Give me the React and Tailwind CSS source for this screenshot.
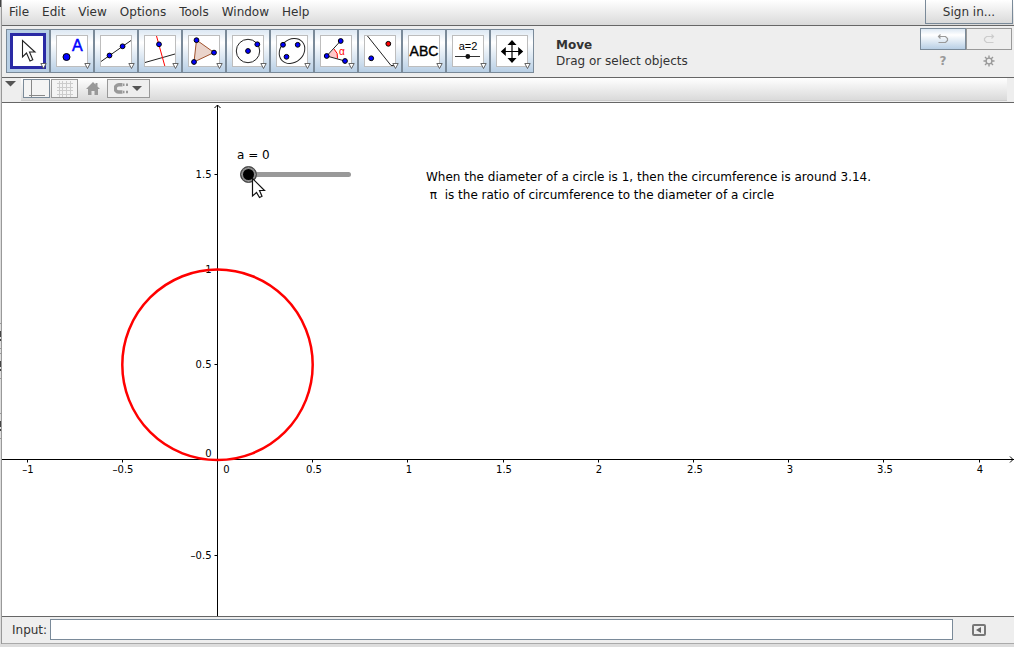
import { useState } from "react";

const UNIT = 190.4;
const ORIGIN = { x: 215.5, y: 356.5 };

const menus = ["File", "Edit", "View", "Options", "Tools", "Window", "Help"];
const xTicks = [-1, -0.5, 0.5, 1, 1.5, 2, 2.5, 3, 3.5, 4];
const yTicks = [1.5, 1, 0.5, -0.5];

function Dot({ x, y, r = 2.4, fill = "#0000ff" }) {
  return <circle cx={x} cy={y} r={r} fill={fill} stroke="#000" strokeWidth="1" />;
}

const tools = [
  {
    id: "Move",
    art: <path d="M15.5 10.5v16.5l4-4 3.5 8 2.8-1.3-3.3-7.7h5.5z" fill="#fff" stroke="#222" strokeWidth="1.1" />,
  },
  {
    id: "Point",
    art: (
      <>
        <Dot x={15.5} y={27} r={3.5} />
        <text x="21" y="21" fontSize="16" fill="#0000ff" stroke="#0000ff" strokeWidth="0.5">A</text>
      </>
    ),
  },
  {
    id: "Line",
    art: (
      <>
        <path d="M6 31.5 36 10.5" stroke="#222" />
        <Dot x={14.5} y={25.5} />
        <Dot x={27.6} y={16.3} />
      </>
    ),
  },
  {
    id: "Perpendicular Line",
    art: (
      <>
        <path d="M6 32.5 36 24" stroke="#222" />
        <path d="M17.5 6 25.8 36" stroke="#f00" />
        <Dot x={20} y={14.3} />
      </>
    ),
  },
  {
    id: "Polygon",
    art: (
      <>
        <path d="M13.5 10 31 22.5 11 32z" fill="#ead4cb" stroke="#a0522d" />
        <Dot x={13.5} y={10.2} />
        <Dot x={31} y={22.6} />
        <Dot x={11} y={32} />
      </>
    ),
  },
  {
    id: "Circle with Center through Point",
    art: (
      <>
        <circle cx="21" cy="21" r="11.7" fill="none" stroke="#222" />
        <Dot x={21} y={21} />
        <Dot x={30.3} y={14.3} />
      </>
    ),
  },
  {
    id: "Ellipse",
    art: (
      <>
        <ellipse cx="21" cy="21" rx="13.8" ry="11.4" transform="rotate(-42 21 21)" fill="none" stroke="#222" />
        <Dot x={12} y={14.8} />
        <Dot x={26.7} y={14.8} />
        <Dot x={15.5} y={26.8} />
      </>
    ),
  },
  {
    id: "Angle",
    art: (
      <>
        <path d="M11.7 26 19 19Q23.500 23 22.500 28.500z" fill="#ffc8c8" />
        <path d="M19 19Q23.500 23 22.500 28.500" fill="none" stroke="#f00" />
        <path d="M25.5 11 11.7 26 30 31" fill="none" stroke="#222" />
        <Dot x={25.7} y={11} />
        <Dot x={11.7} y={26} />
        <Dot x={30} y={31} />
        <text x="24" y="25" fontSize="10" fill="#f00">α</text>
      </>
    ),
  },
  {
    id: "Reflect about Line",
    art: (
      <>
        <path d="M8.500 6 32 35.500H36" fill="none" stroke="#222" />
        <Dot x={29.3} y={13.8} fill="#ff0000" />
        <Dot x={12.2} y={28.3} />
      </>
    ),
  },
  {
    id: "Text",
    art: (
      <text x="21" y="26" fontSize="14" textAnchor="middle" fill="#000" stroke="#000" strokeWidth="0.4">ABC</text>
    ),
  },
  {
    id: "Slider",
    art: (
      <>
        <text x="21" y="20" fontSize="11" textAnchor="middle" fill="#000">a=2</text>
        <path d="M8 26.500H33" stroke="#333" />
        <circle cx="20.8" cy="26.500" r="2.4" fill="#111" />
      </>
    ),
  },
  {
    id: "Move Graphics View",
    art: (
      <>
        <path d="M11 21.500H31M21 12V32" stroke="#000" strokeWidth="1.2" />
        <path d="M21 10 25.500 15h-9zM21 33 25.500 28h-9zM9.800 21.500l5-4.500v9zM32.200 21.500l-5-4.500v9z" fill="#000" />
      </>
    ),
  },
];

function ToolButton({ tool, active, onClick }) {
  return (
    <button
      onClick={onClick}
      title={tool.id}
      aria-pressed={active}
      className={`size-11 shrink-0 border border-[#7a8a99] ${
        active ? "bg-[#b8cfe5]" : "bg-linear-to-b from-[#dde8f3] via-white via-30% to-[#b8cfe5]"
      }`}
    >
      <svg viewBox="0 0 42 42" className="block w-full" fontFamily="Liberation Sans, sans-serif">
        {active ? (
          <rect x="4.5" y="4.5" width="33" height="33" fill="#fff" stroke="#2a2aa5" strokeWidth="3" />
        ) : (
          <rect x="5.5" y="5.5" width="31" height="31" fill="#fff" stroke="#bdbdbd" />
        )}
        {tool.art}
        <path d="M33.8 33.5h5.4l-2.7 5z" fill="#fff" stroke="#555" strokeWidth="0.9" />
      </svg>
    </button>
  );
}

function MenuBar() {
  return (
    <header className="flex h-[26px] items-stretch border-b border-[#666] bg-linear-to-b from-white to-[#dadada]">
      <nav className="flex items-center gap-[13px] pb-0.5 pl-[7px]">
        {menus.map((m) => (
          <button key={m}>{m}</button>
        ))}
      </nav>
      <button className="mr-px mb-px ml-auto w-[88px] border border-t-0 border-[#7a8a99] bg-linear-to-b from-white to-[#dadada]">
        Sign in...
      </button>
    </header>
  );
}

function Toolbar({ tool, setTool }) {
  return (
    <div className="flex h-[52px] border-b border-[#666] bg-[#eee] pt-[3px] pl-1">
      {tools.map((t) => (
        <ToolButton key={t.id} tool={t} active={tool === t.id} onClick={() => setTool(t.id)} />
      ))}
      <div className="ml-[22px] pt-2 leading-4">
        <p className="font-bold">{tool}</p>
        <p>Drag or select objects</p>
      </div>
      <div className="-mt-px mr-0.5 ml-auto grid h-[44px] grid-cols-[46px_46px] grid-rows-[22px_22px]">
        <button title="Undo" className="flex items-center justify-center border border-[#7a8a99] bg-linear-to-b from-[#dde8f3] via-white via-30% to-[#b8cfe5]">
          <svg width="12" height="10" fill="none" stroke="#999" strokeWidth="1.2">
            <path d="M1 2.500H8.500L10.500 4.500V6.500L8.500 8.500H1.500M3.500 0.500 1.500 2.500 3.500 4.500" />
          </svg>
        </button>
        <button title="Redo" disabled className="flex items-center justify-center border border-[#999]">
          <svg width="12" height="10" fill="none" stroke="#ccc" strokeWidth="1.2">
            <path d="M11 2.500H3.500L1.500 4.500V6.500L3.500 8.500H10.500M8.500 0.500 10.500 2.500 8.500 4.500" />
          </svg>
        </button>
        <button title="Help" className="font-bold text-[#999]">?</button>
        <button title="Settings" className="flex items-center justify-center">
          <svg width="12" height="12" fill="none" stroke="#999" strokeWidth="1.4">
            <circle cx="6" cy="6" r="2.9" />
            <path d="M6 3V0.500M6 9V11.500M3 6H0.500M9 6H11.500M4 4 2 2M8 4 10 2M4 8 2 10M8 8 10 10" />
          </svg>
        </button>
      </div>
    </div>
  );
}

function StyleBar() {
  return (
    <div className="flex h-[25px] border-b border-[#666] bg-[#eee] pr-[7px]">
      <button title="Toggle style bar" className="flex w-[19px] pt-[3px] pl-[3px]">
        <svg width="11" height="6"><path d="M0 0H11L5.500 5.500z" fill="#555" /></svg>
      </button>
      <div className="mb-px flex flex-1 items-start border-b border-[#ccc] bg-linear-to-b from-white to-[#dadada] pt-px pl-0.5">
        <button title="Show axes" className="h-[19px] w-[27px] border border-[#7a8a99] bg-[#f4f4f4] pl-1">
          <svg width="17" height="17"><path d="M3.500 0V17M1 15.500H17" stroke="#888" /></svg>
        </button>
        <button title="Show grid" className="ml-px h-[19px] w-[27px] border border-[#999] bg-[#f4f4f4] pl-1">
          <svg width="17" height="17"><path d="M3.500 1V17M6.500 1V17M10.500 1V17M14.500 1V17M1 3.500H17M1 7.500H17M1 10.500H17M1 14.500H17" stroke="#ccc" /></svg>
        </button>
        <button title="Standard view" className="ml-[7px] flex h-[19px] w-4 items-center justify-center">
          <svg width="14" height="13">
            <path d="M7 0 9.500 2.500V1H11.500V4.500L14 7H12V13H8.500V9H5.500V13H2V7H0z" fill="#999" />
          </svg>
        </button>
        <button title="Point capturing" className="ml-1.5 h-[19px] w-[43px] border border-[#999] bg-[#eee] pl-1.5">
          <svg width="30" height="17">
            <path d="M8.500 4.800H4.800A3.600 3.600 0 0 0 4.800 12H8.500" fill="none" stroke="#999" strokeWidth="3.400" />
            <path d="M9 4.800H10.500M9 12H10.500M12 4.800H14M12 12H14" stroke="#999" strokeWidth="2.400" />
            <path d="M18 6H28L23 11z" fill="#555" />
          </svg>
        </button>
      </div>
    </div>
  );
}

function label(n) {
  return n < 0 ? `–${-n}` : `${n}`;
}

function Plot() {
  const { x, y } = ORIGIN;
  return (
    <svg className="absolute inset-0 h-full w-full text-[10px]">
      <g stroke="#000">
        <line x1="0" y1={y} x2="100%" y2={y} />
        <line x1={x} y1="2" x2={x} y2="100%" />
        <path d={`M${x - 3} 5 ${x} 2 ${x + 3} 5`} fill="none" />
        {xTicks.map((t) => {
          const tx = Math.floor(x + t * UNIT) + 0.5;
          return <line key={t} x1={tx} x2={tx} y1={y} y2={y + 3} />;
        })}
        {yTicks.map((t) => {
          const ty = Math.round(y - t * UNIT) + 0.5;
          return <line key={t} x1={x - 3} x2={x} y1={ty} y2={ty} />;
        })}
      </g>
      <svg x="100%" y={y} overflow="visible">
        <path d="M-4 -3 -1 0 -4 3" fill="none" stroke="#000" />
      </svg>
      {xTicks.map((t) => (
        <text key={t} x={Math.round(x + t * UNIT) + 1} y={y + 13.5} textAnchor="middle">{label(t)}</text>
      ))}
      <text x={x + 9} y={y + 13.5} textAnchor="middle">0</text>
      {yTicks.map((t) => (
        <text key={t} x={x - 6} y={Math.round(y - t * UNIT) + 4} textAnchor="end">{label(t)}</text>
      ))}
      <text x={x - 6} y={y - 2.5} textAnchor="end">0</text>
      <circle cx={x} cy={y - UNIT / 2 + 0.5} r={UNIT / 2} fill="none" stroke="#f00" strokeWidth="2.5" />
    </svg>
  );
}

function GraphicsView() {
  const [a, setA] = useState(0);

  return (
    <main className="relative min-h-[400px] flex-1 overflow-hidden bg-white text-black">
      <Plot />
      <label htmlFor="slider-a" className="absolute top-11 left-[235px] leading-4">a = {a}</label>
      <input
        id="slider-a"
        type="range"
        min="0"
        max="3.14"
        step="0.01"
        value={a}
        onChange={(e) => setA(Number(e.target.value))}
        className="absolute top-[63px] left-[238px] h-[17px] w-[111px] appearance-none bg-transparent [&::-webkit-slider-runnable-track]:h-[5px] [&::-webkit-slider-runnable-track]:rounded-full [&::-webkit-slider-runnable-track]:bg-[#999] [&::-webkit-slider-thumb]:-mt-1.5 [&::-webkit-slider-thumb]:size-[17px] [&::-webkit-slider-thumb]:appearance-none [&::-webkit-slider-thumb]:rounded-full [&::-webkit-slider-thumb]:border [&::-webkit-slider-thumb]:border-[#555] [&::-webkit-slider-thumb]:bg-black [&::-webkit-slider-thumb]:shadow-[inset_0_0_0_2px_#8c8c8c]"
      />
      <svg width="16" height="22" className="pointer-events-none absolute top-[74px] left-[249px]">
        <path d="M1.500 1.500V19L5.500 15.500 8.500 20.500 11 19.300 8.500 13.500H13.500z" fill="#fff" stroke="#111" strokeWidth="1.2" />
      </svg>
      <div className="absolute top-[65px] left-[424px] leading-[18px] whitespace-pre">
        <p>When the diameter of a circle is 1, then the circumference is around 3.14.</p>
        <p> π  is the ratio of circumference to the diameter of a circle</p>
      </div>
    </main>
  );
}

function InputBar() {
  return (
    <footer className="flex h-7 items-center border-t border-b border-[#666] border-b-[#aaa] bg-[#eee] pb-px pl-2.5">
      <label htmlFor="algebra-input" className="w-[38px]">Input:</label>
      <input
        id="algebra-input"
        type="text"
        className="h-[21px] min-w-0 flex-1 border border-[#7a8a99] bg-white px-1 outline-none"
      />
      <button title="Input help" className="flex w-[61px] justify-center pr-2.5">
        <svg width="14" height="12">
          <rect x="1" y="1" width="12" height="10" rx="1" fill="#eee" stroke="#777" strokeWidth="2" />
          <path d="M4 6 9 3V9z" fill="#666" />
        </svg>
      </button>
    </footer>
  );
}

// sliver of the window that lies behind this one
function BackWindowEdge() {
  return (
    <svg className="w-px shrink-0" aria-hidden="true">
      <path d="M0.500 0V7M0.500 331V337M0.500 339V341M0.500 361V367M0.500 369V371M0.500 421V427M0.500 429V431" stroke="#444" />
      <path d="M0.500 323V324M0.500 348V349M0.500 353V354M0.500 378V379M0.500 413V414M0.500 438V439" stroke="#999" />
    </svg>
  );
}

export default function App() {
  const [tool, setTool] = useState("Move");

  return (
    <div className="flex min-h-screen bg-[#ddd] pb-[3px] font-['DejaVu_Sans',sans-serif] text-xs text-[#333]">
      <BackWindowEdge />
      <div className="flex min-w-0 flex-1 flex-col border-l border-[#999]">
        <MenuBar />
        <Toolbar tool={tool} setTool={setTool} />
        <StyleBar />
        <GraphicsView />
        <InputBar />
      </div>
    </div>
  );
}
